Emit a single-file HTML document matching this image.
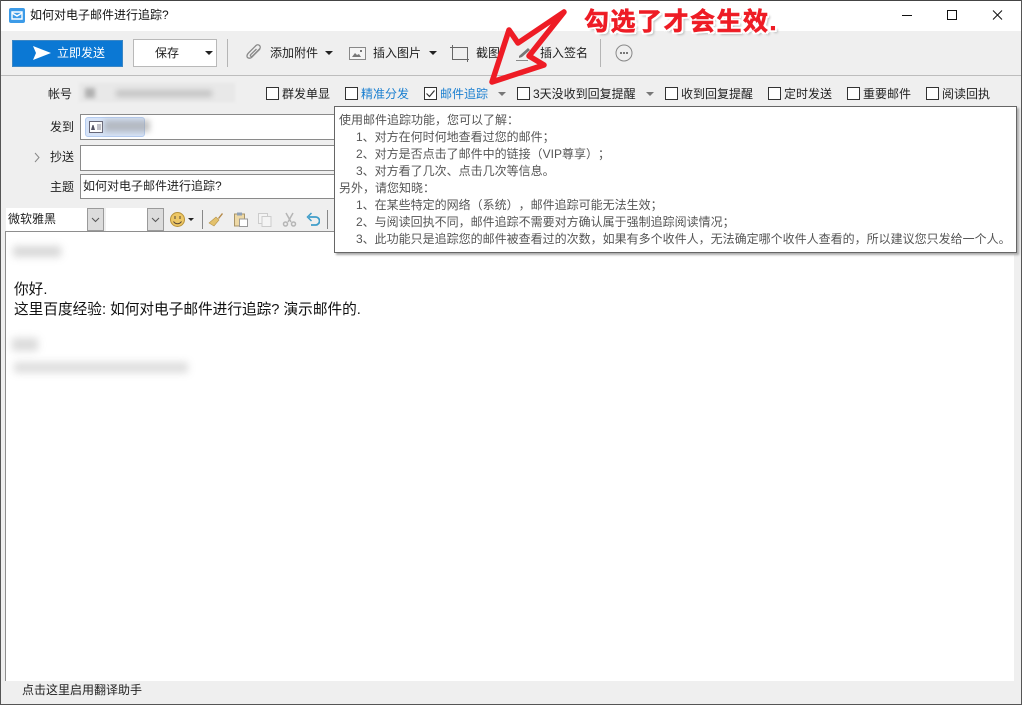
<!DOCTYPE html>
<html lang="zh-CN"><head><meta charset="utf-8"><title>如何对电子邮件进行追踪?</title>
<style>
*{box-sizing:border-box}
html,body{margin:0;padding:0;width:1022px;height:705px;overflow:hidden;background:#efefef}
body{position:relative;font:12px/17px "Liberation Sans","Noto Sans CJK SC",sans-serif;color:#222;text-spacing-trim:space-all}
.a{position:absolute;white-space:nowrap}
.cb{position:absolute;width:13px;height:13px;border:1px solid #333;background:#fff;top:87px}
.tri{position:absolute;width:0;height:0;border-left:4px solid transparent;border-right:4px solid transparent;border-top:4px solid #222}
.grey{border-top-color:#777}
.sep{position:absolute;width:1px;background:#b5b5b5}
.in{position:absolute;left:80px;width:270px;background:#fff;border:1px solid #8a8a8a}
.blur{position:absolute;background:#999;filter:blur(4px)}
.box{position:absolute;background:#e8e8e8;filter:blur(1px)}
.tip div{position:absolute;white-space:nowrap;color:#555;line-height:17px}
</style></head><body>
<div class="a" style="left:0;top:0;width:1022px;height:31px;background:#fff"></div>
<div class="a" style="left:0;top:0;width:1022px;height:1px;background:#444"></div>
<div class="a" style="left:0;top:0;width:1px;height:705px;background:#555"></div>
<div class="a" style="left:1021px;top:0;width:1px;height:705px;background:#555"></div>
<div class="a" style="left:0;top:704px;width:1022px;height:1px;background:#555"></div>
<svg class="a" style="left:9px;top:8px" width="16" height="15" viewBox="0 0 16 15"><rect width="16" height="15" rx="2" fill="#3c9be8"/><path d="M3 4h10v7H3z" fill="none" stroke="#fff" stroke-width="1.4"/><path d="M3 5l5 3 5-3" fill="none" stroke="#fff" stroke-width="1.4"/></svg>
<div class="a" style="left:30px;top:7px;color:#111">如何对电子邮件进行追踪?</div>
<svg class="a" style="left:895px;top:5px" width="110" height="20" viewBox="0 0 110 20" fill="none" stroke="#111"><path d="M7 10.500h10"/><rect x="52.500" y="5.500" width="9" height="9"/><path d="M98 5.500l9 9M107 5.500l-9 9"/></svg>

<div class="a" style="left:12px;top:40px;width:111px;height:27px;background:#0b78d4;border:1px solid #3b86c4"></div>
<svg class="a" style="left:32px;top:45px" width="20" height="16" viewBox="0 0 20 16"><path d="M1 1l18 7-18 7 3-7z" fill="#fff"/></svg>
<div class="a" style="left:57px;top:45px;color:#fff">立即发送</div>
<div class="a" style="left:133px;top:39px;width:84px;height:28px;background:#fff;border:1px solid #b9b9b9"></div>
<div class="a" style="left:155px;top:45px">保存</div>
<div class="tri" style="left:205px;top:51px"></div>
<div class="sep" style="left:227px;top:39px;height:28px"></div>
<svg class="a" style="left:246px;top:44px" width="17" height="18" viewBox="0 0 17 18" fill="none" stroke="#8a8a8a" stroke-width="1.300"><path d="M14 5l-8 8c-1.500 1.500-3.500 1.500-4.500.5s-.5-3 1-4.500L10 1.500c1-1 2.500-1 3.500 0s1 2.500 0 3.500L6.500 12c-.6.600-1.400.600-1.800.2s-.4-1.200.2-1.800L10.500 5"/></svg>
<div class="a" style="left:270px;top:45px">添加附件</div>
<div class="tri" style="left:325px;top:51px"></div>
<svg class="a" style="left:349px;top:47px" width="17" height="13" viewBox="0 0 17 13"><rect x=".5" y=".5" width="16" height="12" fill="#f4f4f4" stroke="#888"/><path d="M3 10l3-4 2 2 2-1 2 3z" fill="#777"/><rect x="11" y="3" width="2" height="2" fill="#777"/></svg>
<div class="a" style="left:373px;top:45px">插入图片</div>
<div class="tri" style="left:429px;top:51px"></div>
<svg class="a" style="left:450px;top:45px" width="20" height="17" viewBox="0 0 20 17" fill="none" stroke="#666"><path d="M2.500 0v14.500H19M0 2.500h17.500V17"/></svg>
<div class="a" style="left:476px;top:45px">截图</div>
<svg class="a" style="left:516px;top:45px" width="18" height="16" viewBox="0 0 18 16"><path d="M3 11L12 3l2 2-8 7-3 1z" fill="#777"/><path d="M0 15.500h12" stroke="#888"/></svg>
<div class="a" style="left:540px;top:45px">插入签名</div>
<div class="sep" style="left:600px;top:39px;height:28px"></div>
<svg class="a" style="left:615px;top:44px" width="18" height="18" viewBox="0 0 18 18"><circle cx="9" cy="9" r="8" fill="none" stroke="#888"/><path d="M5 8h2v2H5zM8 8h2v2H8zM11 8h2v2h-2z" fill="#777"/></svg>
<div class="a" style="left:1px;top:75px;width:1020px;height:1px;background:#bdbdbd"></div>

<div class="a" style="left:48px;top:86px">帐号</div>
<div class="box" style="left:79px;top:83px;width:156px;height:19px"></div>
<div class="blur" style="left:85px;top:88px;width:10px;height:10px;opacity:.7;filter:blur(2px)"></div>
<div class="blur" style="left:116px;top:90px;width:96px;height:7px;opacity:.45;filter:blur(3px)"></div>
<div class="cb" style="left:266px"></div><div class="a" style="left:282px;top:86px">群发单显</div>
<div class="cb" style="left:345px"></div><div class="a" style="left:361px;top:86px;color:#1a7fd0">精准分发</div>
<div class="cb" style="left:424px"></div><svg class="a" style="left:424px;top:87px" width="13" height="13" viewBox="0 0 13 13"><path d="M2.500 6.500l3 3 5-6" fill="none" stroke="#333" stroke-width="1.200"/></svg>
<div class="a" style="left:440px;top:86px;color:#1a7fd0">邮件追踪</div>
<div class="tri grey" style="left:498px;top:92px"></div>
<div class="cb" style="left:517px"></div><div class="a" style="left:533px;top:86px">3天没收到回复提醒</div>
<div class="tri grey" style="left:646px;top:92px"></div>
<div class="cb" style="left:665px"></div><div class="a" style="left:681px;top:86px">收到回复提醒</div>
<div class="cb" style="left:768px"></div><div class="a" style="left:784px;top:86px">定时发送</div>
<div class="cb" style="left:847px"></div><div class="a" style="left:863px;top:86px">重要邮件</div>
<div class="cb" style="left:926px"></div><div class="a" style="left:942px;top:86px">阅读回执</div>

<div class="a" style="left:50px;top:119px">发到</div>
<div class="in" style="top:114px;height:26px"></div>
<div class="a" style="left:85px;top:117px;width:60px;height:20px;background:#d6e3f7;border:1px solid #b5ccf0;border-radius:3px"></div>
<svg class="a" style="left:89px;top:121px" width="14" height="12" viewBox="0 0 14 12"><rect x=".5" y=".5" width="13" height="11" fill="#fff" stroke="#667"/><path d="M2 9l1.500-5h1L6 9z" fill="#556"/><path d="M8 4h4M8 6h4M8 8h4" stroke="#889"/></svg>
<div class="blur" style="left:104px;top:120px;width:46px;height:12px;opacity:.55;filter:blur(3px)"></div>
<svg class="a" style="left:34px;top:152px" width="7" height="11" viewBox="0 0 7 11"><path d="M1 1l4 4.500L1 10" fill="none" stroke="#888"/></svg>
<div class="a" style="left:50px;top:149px">抄送</div>
<div class="in" style="top:145px;height:26px"></div>
<div class="a" style="left:50px;top:179px">主题</div>
<div class="in" style="top:174px;height:25px"></div>
<div class="a" style="left:83px;top:178px;color:#222">如何对电子邮件进行追踪?</div>

<div class="a" style="left:6px;top:208px;width:98px;height:23px;background:#fff"></div>
<div class="a" style="left:8px;top:211px">微软雅黑</div>
<div class="a" style="left:87px;top:208px;width:17px;height:23px;background:#dcdcdc;border:1px solid #9a9a9a"></div>
<svg class="a" style="left:91px;top:217px" width="9" height="6"><path d="M1 1l3.500 3.500L8 1" fill="none" stroke="#555"/></svg>
<div class="a" style="left:106px;top:208px;width:58px;height:23px;background:#fff"></div>
<div class="a" style="left:147px;top:208px;width:17px;height:23px;background:#dcdcdc;border:1px solid #9a9a9a"></div>
<svg class="a" style="left:151px;top:217px" width="9" height="6"><path d="M1 1l3.500 3.500L8 1" fill="none" stroke="#555"/></svg>
<svg class="a" style="left:170px;top:212px" width="15" height="15" viewBox="0 0 15 15"><circle cx="7.500" cy="7.500" r="7" fill="#edc765" stroke="#b8923a"/><path d="M5 4v3M10 4v3" stroke="#543"/><path d="M3.500 9.500c2 3 6 3 8 0" fill="none" stroke="#543"/></svg>
<div class="tri" style="left:188px;top:218px;border-left-width:3px;border-right-width:3px;border-top-width:3px"></div>
<div class="sep" style="left:202px;top:210px;height:19px;background:#888"></div>
<svg class="a" style="left:208px;top:212px" width="16" height="15" viewBox="0 0 16 15"><path d="M10 6l4-5 1 1-4 5z" fill="#b58a4a"/><path d="M1 11l7-6 3 3-5 6z" fill="#e3c16c" stroke="#b5934a" stroke-width=".6"/></svg>
<svg class="a" style="left:234px;top:212px" width="14" height="15" viewBox="0 0 14 15"><rect x=".5" y="2" width="10" height="12" fill="#eed9a6" stroke="#a89468"/><rect x="3" y="0.500" width="5" height="3" fill="#8fa0b5"/><rect x="5.500" y="7" width="8" height="7.500" fill="#fff" stroke="#999"/></svg>
<svg class="a" style="left:258px;top:213px" width="14" height="14" viewBox="0 0 14 14" fill="#f4f4f4" stroke="#ccc"><rect x=".5" y=".5" width="9" height="10"/><rect x="4" y="3.500" width="9" height="10"/></svg>
<svg class="a" style="left:282px;top:212px" width="15" height="15" viewBox="0 0 15 15" fill="none" stroke="#b5b5b5" stroke-width="1.500"><path d="M4 1l5 9M11 1L6 10"/><circle cx="3.500" cy="12" r="2"/><circle cx="11.500" cy="12" r="2"/></svg>
<svg class="a" style="left:306px;top:212px" width="14" height="15" viewBox="0 0 14 15" fill="none" stroke="#3f9dc9" stroke-width="1.800"><path d="M3 5h6a4 4 0 0 1 1 8H5"/><path d="M5.500 1L1.500 5l4 4" stroke-width="1.500"/></svg>
<div class="sep" style="left:327px;top:210px;height:19px;background:#888"></div>

<div class="a" style="left:5px;top:231px;width:1009px;height:450px;background:#fff;border:1px solid #8e8e8e;border-width:1px 0 0 1px"></div>
<div class="blur" style="left:13px;top:246px;width:48px;height:11px;opacity:.38"></div>
<div class="a" style="left:14px;top:280px;font-size:14.67px;line-height:20px;color:#111">你好.</div>
<div class="a" style="left:14px;top:300px;font-size:14.67px;line-height:20px;color:#111">这里百度经验: 如何对电子邮件进行追踪? 演示邮件的.</div>
<div class="blur" style="left:12px;top:338px;width:26px;height:13px;opacity:.35"></div>
<div class="blur" style="left:14px;top:362px;width:174px;height:11px;opacity:.32"></div>
<div class="a" style="left:22px;top:682px;color:#222">点击这里启用翻译助手</div>

<div class="a tip" style="left:334px;top:106px;width:683px;height:147px;background:#fff;border:1px solid #666;box-shadow:2px 2px 2px #aaa">
<div style="left:4px;top:5px">使用邮件追踪功能，您可以了解：</div>
<div style="left:21px;top:22px">1、对方在何时何地查看过您的邮件；</div>
<div style="left:21px;top:39px">2、对方是否点击了邮件中的链接（VIP尊享）；</div>
<div style="left:21px;top:56px">3、对方看了几次、点击几次等信息。</div>
<div style="left:4px;top:73px">另外，请您知晓：</div>
<div style="left:21px;top:90px">1、在某些特定的网络（系统），邮件追踪可能无法生效；</div>
<div style="left:21px;top:107px">2、与阅读回执不同，邮件追踪不需要对方确认属于强制追踪阅读情况；</div>
<div style="left:21px;top:124px">3、此功能只是追踪您的邮件被查看过的次数，如果有多个收件人，无法确定哪个收件人查看的，所以建议您只发给一个人。</div>
</div>

<svg class="a" style="left:0;top:0" width="1022" height="110" viewBox="0 0 1022 110"><path d="M564 12L518 43 509 30 492 82 544 65 529 56z" fill="none" stroke="#ee1c25" stroke-width="5.500" stroke-linejoin="round"/></svg>
<div class="a" style="left:584px;top:5px;font-size:25px;letter-spacing:1.500px;line-height:34px;font-weight:bold;color:#ee1c25;-webkit-text-stroke:.6px #ee1c25;text-shadow:-2px 0 #fff,2px 0 #fff,0 -2px #fff,0 2px #fff,-2px -2px #fff,2px 2px #fff,-2px 2px #fff,2px -2px #fff,3px 3px 2px #bbb">勾选了才会生效.</div>
</body></html>
